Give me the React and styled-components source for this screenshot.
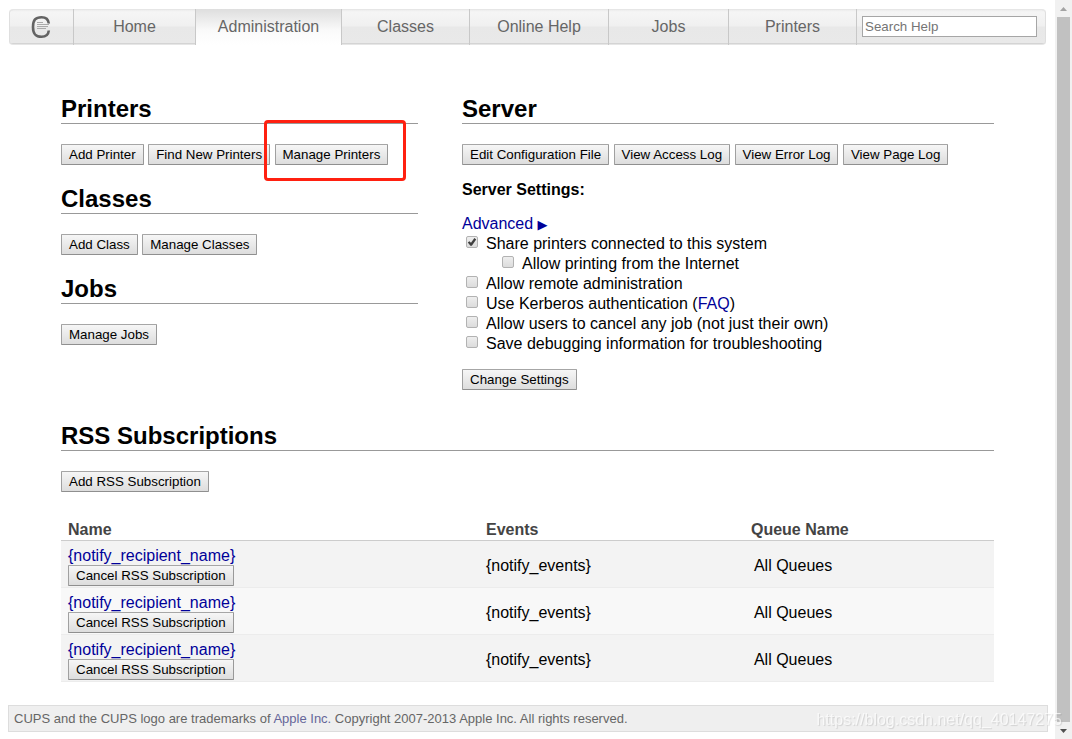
import React from 'react';
import styled, { createGlobalStyle } from 'styled-components';

const GlobalStyle = createGlobalStyle`
    body {
        margin: 0;
        background: #fff;
        color: #000;
        font: 16px/20px "Liberation Sans", Arial, Helvetica, sans-serif;
    }
    * {
        box-sizing: border-box;
    }
`;

const Screen = styled.div`
    display: flex;
    height: 100vh;
    overflow: hidden;
`;

const Page = styled.div`
    flex: 1;
    min-width: 0;
    padding: 9px 7px 0 8px;
`;

const Link = styled.a`
    color: #000099;
    text-decoration: none;
`;

const Nav = styled.nav`
    display: grid;
    grid-template-columns: 65fr 122fr 146fr 128fr 139fr 120fr 128fr 189fr;
    height: 36px;
    margin: 0 2px 0 1px;
    border: solid #e6e6e6;
    border-width: 1px 0;
    border-radius: 4px;
    background: linear-gradient(#ececec 0, #f5f5f5 2px, #f0f0f0 16px, #e8e8e8 17px, #e9e9e9 33px, #d4d4d4 33px);
    box-shadow: inset 1px 0 #dfdfdf, inset -1px 0 #dfdfdf;
`;

const Tab = styled.a`
    display: flex;
    align-items: center;
    justify-content: center;
    margin: -1px 0;
    padding-bottom: 1px;
    border-right: 1px solid #c8c8c8;
    background: ${props => props.$active ? 'linear-gradient(#dedede, #fafafa 60%, #fff)' : 'none'};
    color: #666;
    text-decoration: none;
`;

const SearchForm = styled.form`
    display: flex;
    align-items: center;
    padding: 0 9px 2px 5px;
`;

const SearchInput = styled.input`
    width: 100%;
    height: 21px;
    padding: 0 2px;
    border: 1px solid #a6a6a6;
    background: #fff;
    font-family: inherit;
    &::placeholder {
        color: #757575;
    }
`;

const Content = styled.main`
    padding: 50px 54px 0 53px;
`;

const Columns = styled.div`
    display: grid;
    grid-template-columns: 357fr 532fr;
    column-gap: 44px;
    margin-bottom: 32px;
`;

const Section = styled.section`
    & + & {
        margin-top: 20px;
    }
`;

const Title = styled.h2`
    margin: 0 0 20px;
    border-bottom: 1px solid #999;
    font-size: 24px;
    line-height: 28px;
`;

const ButtonRow = styled.div`
    white-space: nowrap;
`;

const Button = styled.button`
    height: 21px;
    padding: 0 7px;
    border: 1px solid;
    border-color: #a6a6a6 #999 #8f8f8f #a0a0a0;
    border-radius: 1px;
    background: linear-gradient(#f6f6f6, #dddddd);
    color: #000;
    font-family: inherit;
    vertical-align: top;
    white-space: nowrap;
`;

const Marked = styled.div`
    position: relative;
    display: inline-flex;
    vertical-align: top;
    &::after {
        content: "";
        position: absolute;
        top: -24px;
        right: -18px;
        bottom: -16px;
        left: -11px;
        border: 3px solid #ff2010;
        border-radius: 4px;
        pointer-events: none;
    }
`;

const Settings = styled.form`
    margin: 15px 0 0;
`;

const SettingsTitle = styled.h3`
    margin: 0 0 14px;
    font-size: 16px;
    line-height: 20px;
`;

const Advanced = styled(Link)`
    display: block;
`;

const Arrow = styled.span`
    font-family: "DejaVu Sans", sans-serif;
    font-size: 13px;
    line-height: 16px;
`;

const Setting = styled.div`
    display: flex;
    align-items: flex-start;
    padding-left: ${props => props.$nested ? '36px' : '0'};
`;

const CheckBox = styled.input`
    appearance: none;
    flex: none;
    width: 12px;
    height: 12px;
    margin: 2px 8px 0 4px;
    border: 1px solid #b2b2b2;
    border-radius: 2px;
    background: linear-gradient(#eee, #dcdcdc);
    &:checked::before {
        content: "";
        display: block;
        width: 10px;
        height: 10px;
        background: #404040;
        clip-path: polygon(8% 54%, 24% 42%, 40% 58%, 74% 10%, 92% 24%, 48% 88%, 34% 88%);
    }
`;

const Submit = styled(Button)`
    margin-top: 15px;
`;

const Table = styled.table`
    width: 100%;
    margin-top: 26px;
    border-collapse: collapse;
    table-layout: fixed;
`;

const Head = styled.th`
    width: ${props => props.$width};
    padding: 2px 7px 0;
    border-bottom: 1px solid #ccc;
    color: #444;
    text-align: left;
`;

const Row = styled.tr`
    border-bottom: 1px solid #ececec;
    background: #f8f8f8;
    &:nth-child(odd) {
        background: #f3f3f3;
    }
`;

const Cell = styled.td`
    padding: 3px 7px 0 ${props => props.$indent ? '10px' : '7px'};
`;

const NameCell = styled.td`
    padding: 6px 7px 1px;
    line-height: 18px;
    > * {
        display: block;
    }
`;

const Footer = styled.footer`
    margin-top: 23px;
    padding: 3px 5px 2px;
    border: 1px solid #ddd;
    background: #efefef;
    color: #666;
    font-size: 13px;
    a {
        color: #666699;
    }
`;

const ScrollBar = styled.div`
    display: flex;
    flex-direction: column;
    flex: none;
    width: 17px;
    background: #f1f1f1;
`;

const ScrollArrow = styled.svg`
    flex: none;
    width: 17px;
    height: 17px;
`;

const Thumb = styled.div`
    flex: 1;
    margin: 0 2px;
    background: #c1c1c1;
`;

const Watermark = styled.div`
    position: fixed;
    right: 10px;
    bottom: 9px;
    color: rgba(255, 255, 255, 0.7);
    text-shadow: 1px 1px 1px rgba(0, 0, 0, 0.12);
    pointer-events: none;
`;

const tabs = ['Home', 'Administration', 'Classes', 'Online Help', 'Jobs', 'Printers'];

const settings = [
    { id: 'share', label: 'Share printers connected to this system', checked: true },
    { id: 'internet', label: 'Allow printing from the Internet', nested: true },
    { id: 'remote', label: 'Allow remote administration' },
    { id: 'kerberos', label: 'Use Kerberos authentication', faq: true },
    { id: 'cancel', label: 'Allow users to cancel any job (not just their own)' },
    { id: 'debug', label: 'Save debugging information for troubleshooting' }
];

const subscriptions = [1, 2, 3];

const Logo = () => (
    <svg width="20" height="24" viewBox="0 0 20 24" fill="none">
        <path d="M17.8 8.5C17.4 4.2 15.2 2.2 10.5 2.2C4.5 2.2 2 5 2 12C2 19 4.5 21.8 10.5 21.8C15.2 21.8 17.4 19.8 17.8 15.5" stroke="#636363" strokeWidth="2.6" />
        <path d="M6 7.5H12M6 9.5H18M6 11.5H17M6 13.5H15" stroke="#aaa" strokeWidth="1" />
    </svg>
);

class App extends React.Component {
    render() {
        return (
            <Screen>
                <GlobalStyle />
                <Page>
                    <Nav>
                        <Tab href="#cups" aria-label="CUPS"><Logo /></Tab>
                        {tabs.map(tab =>
                            <Tab key={tab} href="#tab" $active={tab === 'Administration'}>{tab}</Tab>
                        )}
                        <SearchForm>
                            <SearchInput type="text" aria-label="Search Help" placeholder="Search Help" />
                        </SearchForm>
                    </Nav>

                    <Content>
                        <Columns>
                            <div>
                                <Section>
                                    <Title>Printers</Title>
                                    <ButtonRow>
                                        <Button>Add Printer</Button>{' '}
                                        <Button>Find New Printers</Button>{' '}
                                        <Marked><Button>Manage Printers</Button></Marked>
                                    </ButtonRow>
                                </Section>
                                <Section>
                                    <Title>Classes</Title>
                                    <ButtonRow>
                                        <Button>Add Class</Button>{' '}
                                        <Button>Manage Classes</Button>
                                    </ButtonRow>
                                </Section>
                                <Section>
                                    <Title>Jobs</Title>
                                    <ButtonRow>
                                        <Button>Manage Jobs</Button>
                                    </ButtonRow>
                                </Section>
                            </div>
                            <Section>
                                <Title>Server</Title>
                                <ButtonRow>
                                    <Button>Edit Configuration File</Button>{' '}
                                    <Button>View Access Log</Button>{' '}
                                    <Button>View Error Log</Button>{' '}
                                    <Button>View Page Log</Button>
                                </ButtonRow>
                                <Settings>
                                    <SettingsTitle>Server Settings:</SettingsTitle>
                                    <Advanced href="#advanced">Advanced <Arrow>▶</Arrow></Advanced>
                                    {settings.map(({ id, label, checked, nested, faq }) =>
                                        <Setting key={id} $nested={nested}>
                                            <CheckBox type="checkbox" id={id} defaultChecked={checked} />
                                            <div>
                                                <label htmlFor={id}>{label}</label>
                                                {faq && <> (<Link href="#faq">FAQ</Link>)</>}
                                            </div>
                                        </Setting>
                                    )}
                                    <Submit type="button">Change Settings</Submit>
                                </Settings>
                            </Section>
                        </Columns>

                        <Title>RSS Subscriptions</Title>
                        <ButtonRow>
                            <Button>Add RSS Subscription</Button>
                        </ButtonRow>
                        <Table>
                            <thead>
                                <tr>
                                    <Head $width="44.8%">Name</Head>
                                    <Head $width="28.4%">Events</Head>
                                    <Head>Queue Name</Head>
                                </tr>
                            </thead>
                            <tbody>
                                {subscriptions.map(id =>
                                    <Row key={id}>
                                        <NameCell>
                                            <Link href="#rss">{'{notify_recipient_name}'}</Link>
                                            <Button>Cancel RSS Subscription</Button>
                                        </NameCell>
                                        <Cell>{'{notify_events}'}</Cell>
                                        <Cell $indent>All Queues</Cell>
                                    </Row>
                                )}
                            </tbody>
                        </Table>
                    </Content>

                    <Footer>
                        CUPS and the CUPS logo are trademarks of <Link href="#apple">Apple Inc.</Link> Copyright 2007-2013 Apple Inc. All rights reserved.
                    </Footer>
                </Page>
                <ScrollBar>
                    <ScrollArrow viewBox="0 0 17 17"><path d="M5 11L8.5 7L12 11Z" fill="#a3a3a3" /></ScrollArrow>
                    <Thumb />
                    <ScrollArrow viewBox="0 0 17 17"><path d="M5 7L8.5 11L12 7Z" fill="#505050" /></ScrollArrow>
                </ScrollBar>
                <Watermark>https://blog.csdn.net/qq_40147275</Watermark>
            </Screen>
        );
    }
}

export default App;
